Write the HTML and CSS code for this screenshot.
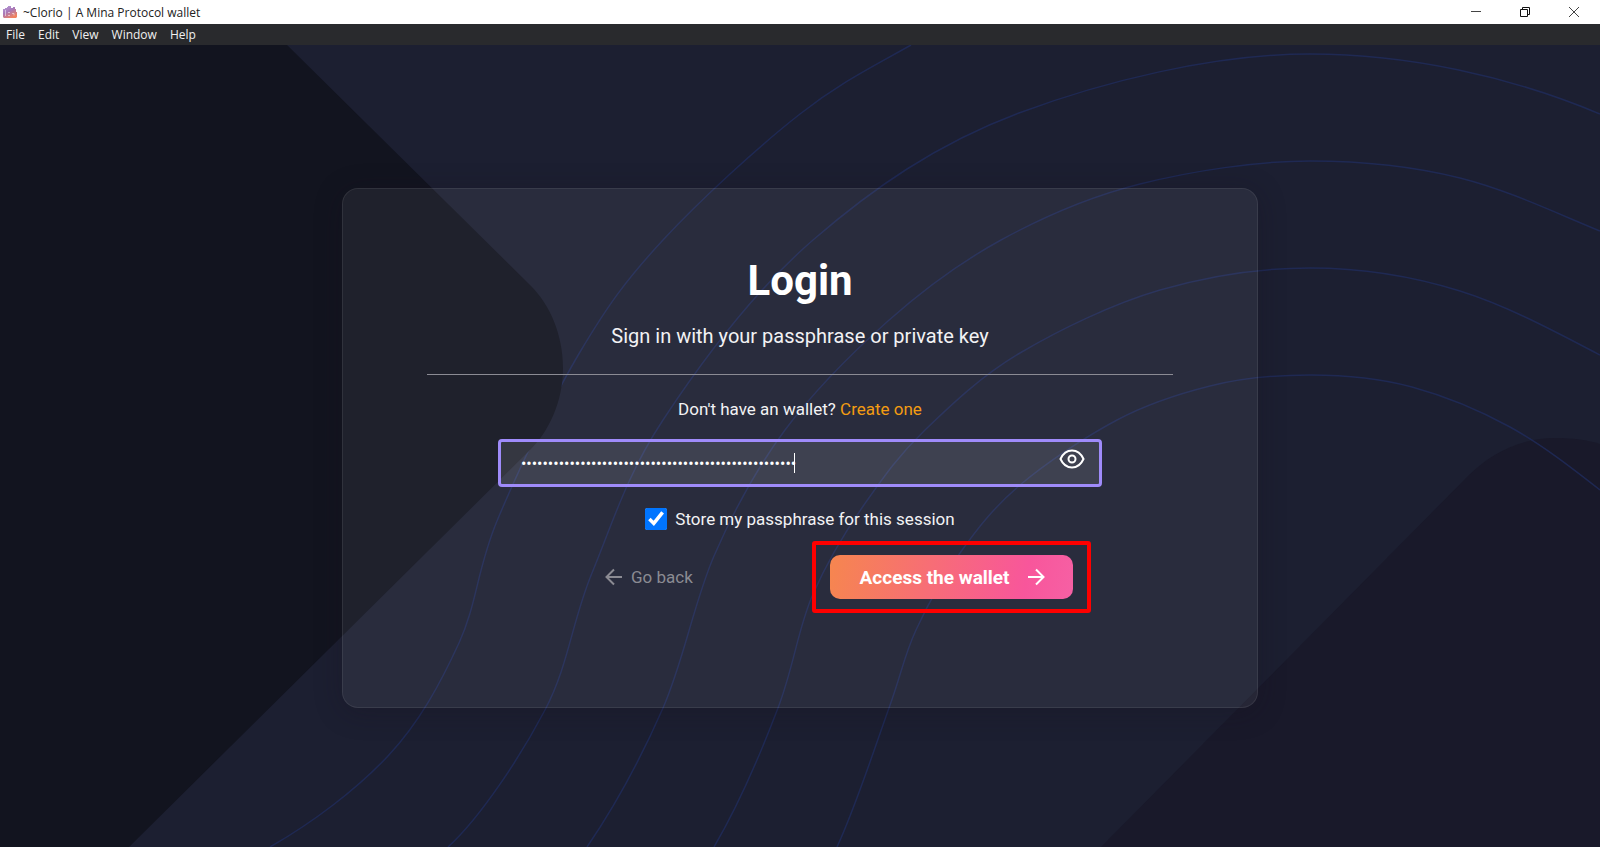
FILE: index.html
```html
<!DOCTYPE html>
<html lang="en">
<head>
    <meta charset="UTF-8">
    <title>~Clorio | A Mina Protocol wallet</title>
    <link rel="stylesheet" href="styles.css">
</head>
<body>

    <!-- window title -->
    <header class="titlebar">
        <svg class="logo" viewBox="0 0 14 14">
            <defs>
                <linearGradient id="logoFill" x1="0" y1="0" x2="0.6" y2="1">
                    <stop offset="0" stop-color="#b9a0dc"/>
                    <stop offset="0.5" stop-color="#a878b8"/>
                    <stop offset="1" stop-color="#f0825f"/>
                </linearGradient>
            </defs>
            <path fill="url(#logoFill)" d="M0 4h2V3h2V2h1V1h3v2h2V2h2v2h1v3h1v5l-1 1H1l-1-1z"/>
            <path fill="none" stroke="#fff" stroke-opacity="0.5" d="M2.500 5v6M5 7.500h2M5 10.500h2M9 8.500h2v2"/>
        </svg>
        <span class="title">~Clorio | A Mina Protocol wallet</span>
        <div class="win-btns">
            <button type="button" aria-label="Minimize"><svg viewBox="0 0 12 12"><path d="M1 5.500h10"/></svg></button>
            <button type="button" aria-label="Restore"><svg class="dark" viewBox="0 0 12 12"><path d="M1.500 3.500h7v7h-7zM3.500 3V1.500h7v7H9"/></svg></button>
            <button type="button" aria-label="Close"><svg viewBox="0 0 12 12"><path d="M1 1l10 10M11 1L1 11"/></svg></button>
        </div>
    </header>

    <nav class="menubar">
        <button type="button">File</button>
        <button type="button">Edit</button>
        <button type="button">View</button>
        <button type="button">Window</button>
        <button type="button">Help</button>
    </nav>

    <main class="page">
        <svg class="bg" viewBox="0 45 1600 802" preserveAspectRatio="xMidYMid slice" aria-hidden="true">
            <path class="shape-right" d="M1101 847L1468 476C1492 452 1522 438 1555 438C1572 438 1588 440 1600 444V847z"/>
            <g class="lines">
                <path d="M270 847C312 823 356 790 388 756S441 682 459 643S477 569 497 521S552 399 580 352S626 280 663 240S759 146 800 114S872 67 911 45"/>
                <path d="M448 847C480 818 521 756 545 710S572 621 592 573S626 476 663 420S754 291 813 240S936 144 1019 113S1213 54 1310 54S1510 76 1600 114"/>
                <path d="M587 847C615 806 642 756 663 708S694 602 714 556S756 469 785 430S852 353 888 321S959 263 1001 240S1088 197 1140 184S1257 161 1310 161S1412 166 1460 178S1556 213 1600 231"/>
                <path d="M714 847C738 806 762 750 778 708S798 628 813 594S847 529 866 502S899 455 925 430S981 376 1020 353S1112 304 1160 290S1260 268 1310 268S1412 276 1460 291S1556 332 1600 355"/>
                <path d="M837 847C856 806 876 744 889 708S904 656 916 630S943 577 960 553S994 507 1020 485S1085 437 1117 420S1178 394 1210 386S1276 375 1310 375S1379 378 1412 387S1479 410 1510 427S1572 468 1600 490"/>
            </g>
            <path class="shape-left" d="M0 45H287L531 286C550 305 563 335 563 368S549 432 529 451L129 847H0z"/>
        </svg>

        <form class="card">
            <h1>Login</h1>
            <p class="subtitle">Sign in with your passphrase or private key</p>
            <hr>
            <p class="create">Don't have an wallet? <a href="#">Create one</a></p>

            <div class="field">
                <input type="password" id="passphrase" aria-label="Passphrase or private key" value="abandonabandonabandonabandonabandonabandonabandonab">
                <span class="caret"></span>
                <button type="button" class="eye" aria-label="Show passphrase">
                    <svg viewBox="0 0 26 20">
                        <path d="M1.500 10C4 4.500 8 1.500 13 1.500S22 4.500 24.500 10C22 15.500 18 18.500 13 18.500S4 15.500 1.500 10z"/>
                        <circle cx="13" cy="10" r="3.500"/>
                    </svg>
                </button>
            </div>

            <div class="store">
                <input type="checkbox" id="store" checked>
                <label for="store">Store my passphrase for this session</label>
            </div>

            <div class="actions">
                <div class="half">
                    <button type="button" class="back">
                        <svg viewBox="0 0 18 18"><path d="M17 9H2M9 1.500L1.500 9L9 16.500"/></svg>
                        Go back
                    </button>
                </div>
                <div class="half">
                    <div class="marker">
                        <button type="submit" class="access">
                            Access the wallet
                            <svg viewBox="0 0 18 18"><path d="M1 9h15M9 1.500L16.500 9L9 16.500"/></svg>
                        </button>
                    </div>
                </div>
            </div>
        </form>
    </main>

</body>
</html>
```
FILE: styles.css
```css
*{
    margin: 0;
    padding: 0;
    box-sizing: border-box;
}

body{
    min-height: 100vh;
    display: flex;
    flex-direction: column;
    background: #1c1f31;
    font-family: Roboto, sans-serif;
    color: #f2f2f4;
}

button{
    border: none;
    background: none;
    font-family: inherit;
    color: inherit;
    cursor: pointer;
}

svg{
    display: block;
    fill: none;
}

.titlebar{
    height: 24px;
    padding: 0 2px 0 3px;
    display: flex;
    align-items: center;
    background: #fff;
    color: #222;
    font: 12px "Open Sans", sans-serif;
}

.logo{
    width: 14px;
    height: 14px;
    margin-right: 6px;
}

.win-btns{
    margin-left: auto;
    display: flex;
}

.win-btns button{
    width: 49px;
    height: 24px;
    display: flex;
    align-items: center;
    justify-content: center;
}

.win-btns svg{
    width: 12px;
    height: 12px;
    stroke: #444;
}

.win-btns .dark{
    stroke: #111;
}

.menubar{
    height: 21px;
    padding-left: 6px;
    display: flex;
    align-items: center;
    gap: 13px;
    background: #292a2d;
}

.menubar button{
    font: 12px "Open Sans", sans-serif;
    color: #f0f0f0;
}

.page{
    position: relative;
    flex: 1;
    display: flex;
    align-items: center;
    justify-content: center;
    padding-top: 4px;
    overflow: hidden;
}

.bg{
    position: absolute;
    top: 0;
    left: 0;
    width: 100%;
    height: 100%;
}

.shape-left{
    fill: #12141f;
}

.shape-right{
    fill: #19192a;
}

.lines{
    stroke: #202c5c;
    stroke-width: 1.500;
    opacity: 0.8;
}

.card{
    position: relative;
    width: 57.250%;
    padding: 67px 84px 94px;
    display: flex;
    flex-direction: column;
    align-items: center;
    background: rgba(255, 255, 255, 0.06);
    border: 1px solid rgba(255, 255, 255, 0.08);
    border-radius: 16px;
    box-shadow: 0 4px 28px rgba(24, 16, 30, 0.3);
}

h1{
    font-size: 42px;
    line-height: 50px;
    font-weight: 700;
    color: #fff;
}

.subtitle{
    margin-top: 16px;
    font-size: 20px;
    line-height: 28px;
}

hr{
    width: 100%;
    margin: 24px 0;
    border: none;
    border-top: 1px solid #8b8b94;
}

.create{
    font-size: 17px;
    line-height: 20px;
}

.create a{
    color: #f39c12;
    text-decoration: none;
}

.field{
    position: relative;
    width: 81%;
    margin-top: 20px;
}

.field input{
    display: block;
    width: 100%;
    height: 48px;
    padding: 0 64px 0 20px;
    background: rgba(255, 255, 255, 0.1);
    border: 3px solid #9f8bfa;
    border-radius: 4px;
    outline: none;
    color: #fff;
    caret-color: transparent;
    font: 16px Roboto, sans-serif;
}

.caret{
    position: absolute;
    top: 14px;
    left: 296px;
    width: 1px;
    height: 20px;
    background: #fff;
}

.eye{
    position: absolute;
    top: 10px;
    right: 17px;
}

.eye svg{
    width: 26px;
    height: 20px;
    stroke: #fff;
    stroke-width: 2;
}

.store{
    margin-top: 20px;
    display: flex;
    align-items: center;
    gap: 8px;
    font-size: 17px;
    line-height: 24px;
}

.store input{
    width: 22px;
    height: 22px;
    accent-color: #0075ff;
}

.actions{
    width: 81%;
    margin-top: 10px;
    display: flex;
}

.half{
    flex: 1;
    display: flex;
    align-items: center;
    justify-content: center;
}

.back{
    display: flex;
    align-items: center;
    gap: 8px;
    font-size: 17px;
    color: #8b8b93;
}

.back svg,.access svg{
    width: 18px;
    height: 18px;
    stroke: currentColor;
    stroke-width: 2;
}

/* red frame round the main action */
.marker{
    padding: 10px 14px;
    border: 4px solid #fe0000;
    border-radius: 3px;
}

.access{
    height: 44px;
    padding: 0 28px 0 30px;
    display: flex;
    align-items: center;
    gap: 17px;
    border-radius: 10px;
    background: linear-gradient(100deg, #f6864f, #f8569b 80%, #f660a4);
    color: #fff;
    font-size: 19px;
    font-weight: 700;
}
```
